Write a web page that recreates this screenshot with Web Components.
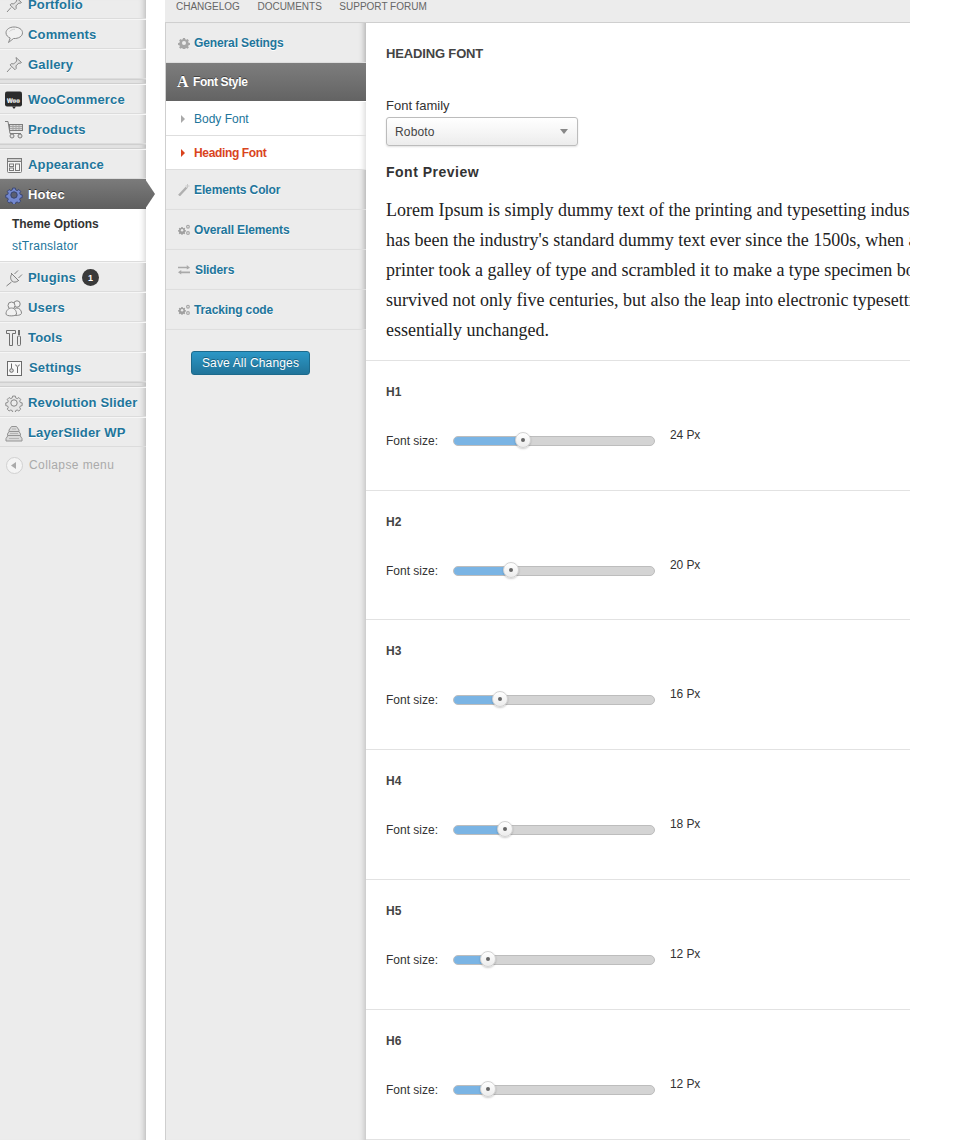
<!DOCTYPE html>
<html>
<head>
<meta charset="utf-8">
<title>Hotec Theme Options</title>
<style>
  html, body { margin: 0; height: 1140px; overflow: hidden; background: #fff; }
  body { display: flex; align-items: stretch; font-family: "Liberation Sans", Arial, sans-serif; }
</style>
</head>
<body>
<wp-sidebar>
  <wp-menu-item icon="pin" label="Portfolio"></wp-menu-item>
  <wp-menu-item icon="comment" label="Comments"></wp-menu-item>
  <wp-menu-item icon="pin" label="Gallery"></wp-menu-item>
  <wp-menu-sep></wp-menu-sep>
  <wp-menu-item icon="woo" label="WooCommerce"></wp-menu-item>
  <wp-menu-item icon="cart" label="Products"></wp-menu-item>
  <wp-menu-sep></wp-menu-sep>
  <wp-menu-item icon="appearance" label="Appearance"></wp-menu-item>
  <wp-menu-item icon="gear-blue" label="Hotec" current></wp-menu-item>
  <wp-submenu></wp-submenu>
  <wp-menu-item icon="plugin" label="Plugins" badge="1"></wp-menu-item>
  <wp-menu-item icon="users" label="Users"></wp-menu-item>
  <wp-menu-item icon="tools" label="Tools"></wp-menu-item>
  <wp-menu-item icon="settings" label="Settings"></wp-menu-item>
  <wp-menu-sep></wp-menu-sep>
  <wp-menu-item icon="gear" label="Revolution Slider"></wp-menu-item>
  <wp-menu-item icon="layers" label="LayerSlider WP"></wp-menu-item>
  <wp-menu-collapse></wp-menu-collapse>
</wp-sidebar>
<options-panel>
  <options-nav slot="nav"></options-nav>
  <font-preview></font-preview>
  <font-size-row name="H1" size="24" pos="70"></font-size-row>
  <font-size-row name="H2" size="20" pos="58" style="height:129px"></font-size-row>
  <font-size-row name="H3" size="16" pos="47"></font-size-row>
  <font-size-row name="H4" size="18" pos="52"></font-size-row>
  <font-size-row name="H5" size="12" pos="35"></font-size-row>
  <font-size-row name="H6" size="12" pos="35"></font-size-row>
</options-panel>

<script>
const COG = 'M7.5 1.5h3l.4 2 1.6.7 1.8-1.1 2 2-1.1 1.8.7 1.6 2 .4v3l-2 .4-.7 1.6 1.1 1.8-2 2-1.8-1.1-1.6.7-.4 2h-3l-.4-2-1.6-.7-1.8 1.1-2-2 1.1-1.8-.7-1.6-2-.4v-3l2-.4.7-1.6-1.1-1.8 2-2 1.800 1.100 1.600-.7z';

const ICONS = {
  pin: `<svg viewBox="0 0 18 18" width="18" height="18" fill="#e2e2e2" stroke="#8a8a8a"><path d="M11 1.500l5.500 5-1.500.8-1.200-.3-2.800 2.900.2 2.600-1.200 1.200-5-4.800 1.200-1.200 2.600.2 2.900-2.900-.2-1.300z"/><path d="M6 11.500L2 16" fill="none"/></svg>`,
  comment: `<svg viewBox="0 0 18 18" width="18" height="18" fill="#f1f1f1" stroke="#8a8a8a"><path d="M9 1C4.500 1 1 3.500 1 6.800c0 2.500 2 4.400 4.200 5.200L3.500 16.500l5-4c5 .3 9-2.200 9-5.700S13.500 1 9 1z"/><path d="M4.500 5.500C6 3.800 8 3.300 10 3.300" fill="none" stroke="#cfcfcf"/></svg>`,
  woo: `<svg viewBox="0 0 18 18" width="18" height="18"><rect x="0" y="0.500" width="17" height="15" rx="2" fill="#2c2c2c"/><path d="M7 15.500h4l-2 2.500z" fill="#2c2c2c"/><text x="8.500" y="10.500" font-size="6" font-weight="700" text-anchor="middle" fill="#ddd" font-family="Liberation Sans">Woo</text></svg>`,
  cart: `<svg viewBox="0 0 18 18" width="18" height="18" fill="none" stroke="#7d7d7d"><path d="M0 .5h3l2 12h11"/><rect x="4.500" y="3.500" width="13" height="6" fill="#d8d8d8"/><path d="M5 5.500h12M5 7.500h12M8 4v5M11 4v5M14 4v5" stroke="#a5a5a5"/><circle cx="7" cy="15" r="2" fill="#e2e2e2"/><circle cx="15" cy="15" r="2" fill="#e2e2e2"/></svg>`,
  appearance: `<svg viewBox="0 0 18 18" width="18" height="18" fill="none" stroke="#7a7a7a"><rect x="2.500" y="2.500" width="14" height="14" rx="1" fill="#f5f5f5"/><rect x="2.500" y="2.500" width="14" height="3" fill="#d0d0d0"/><rect x="4.500" y="8" width="4" height="2.500"/><rect x="4.500" y="12" width="4" height="2.500"/><rect x="10.500" y="8" width="4" height="6.500"/></svg>`,
  gear: `<svg viewBox="0 0 18 18" width="18" height="18" fill="#e6e6e6" stroke="#858585"><path d="${COG}" transform="translate(.7 .7) scale(.92)"/><circle cx="9" cy="9" r="3.200" fill="#ececec"/></svg>`,
  'gear-blue': `<svg viewBox="0 0 18 18" width="18" height="18" fill="#7388cf" stroke="#36436f"><path d="${COG}" transform="translate(.7 .7) scale(.92)"/><circle cx="9" cy="9" r="3.200" fill="#5b5f6f"/></svg>`,
  plugin: `<svg viewBox="0 0 18 18" width="18" height="18" fill="#e6e6e6" stroke="#808080"><path d="M7 5l6.500 6.500c-2.200 2-4.800 2.200-6.500.5S5 7.200 7 5z"/><path d="M9.500 5L13 1.500M13.500 9L17 5.500M6.500 13L1.500 17" fill="none"/><path d="M6 4l8 8" fill="none"/></svg>`,
  users: `<svg viewBox="0 0 18 18" width="18" height="18" fill="#f1f1f1" stroke="#858585"><circle cx="12" cy="5" r="3.200"/><path d="M8 15c0-4 2-6 4-6s4.500 2 4.500 5-8.500 3-8.500 1z"/><circle cx="6.500" cy="6.500" r="3.500"/><path d="M1 15c0-4 3-6 5.500-6s5 2 5 6c0 2.500-10.500 2.500-10.500 0z"/></svg>`,
  tools: `<svg viewBox="0 0 18 18" width="18" height="18" fill="#ececec" stroke="#6f6f6f"><path d="M1.500 1.500h9v3h-3v12h-3v-12h-3z"/><path d="M14 1v5" fill="none" stroke-width="2"/><rect x="12.500" y="7" width="3" height="9.500" rx="1"/></svg>`,
  settings: `<svg viewBox="0 0 18 18" width="18" height="18" fill="none" stroke="#6a6a6a"><rect x="2.500" y="2.500" width="14" height="14" fill="#f8f8f8"/><path d="M6.500 4.500v5M12.500 8v6"/><circle cx="6.500" cy="11.500" r="1.800" fill="#ddd"/><path d="M10.700 5.500a1.800 1.800 0 0 0 3.600 0" /></svg>`,
  layers: `<svg viewBox="0 0 18 18" width="18" height="18" fill="#d9d9d9" stroke="#949494"><path d="M1 14.500l2-3h12l2 3V17H1z"/><path d="M2.500 10L4 7.500h10l1.500 2.500v1.500h-13z"/><path d="M4 6L6.500 2.500h5L14 6v1.500H4z"/><path d="M4 14.500h10M5 9.500h8M7 5h4" stroke="#b5b5b5"/></svg>`
};
const NAV_ICONS = {
  gear: `<svg viewBox="0 0 18 18" width="12" height="12" fill="#a6a6a6"><path d="${COG}"/><circle cx="9" cy="9" r="3" fill="#ececec"/></svg>`,
  wand: `<svg viewBox="0 0 12 12" width="12" height="12" fill="none"><path d="M1 11.500L8.500 3.500" stroke="#b0b0b0" stroke-width="2.500"/><path d="M9.500 0v4M11.500 2h-4" stroke="#c8c8c8"/></svg>`,
  gears: `<svg viewBox="0 0 13 12" width="13" height="12"><g fill="#a0a0a0"><path d="${COG}" transform="translate(0 2) scale(.48)"/></g><circle cx="4.400" cy="6.300" r="1.300" fill="#ececec"/><circle cx="10.800" cy="2.500" r="1.500" fill="none" stroke="#a6a6a6" stroke-width="1.200"/><circle cx="10.800" cy="9.300" r="1.500" fill="none" stroke="#a6a6a6" stroke-width="1.200"/></svg>`,
  swap: `<svg viewBox="0 0 13 12" width="13" height="12" fill="#a9a9a9"><path d="M0 2.500h9.500V0.500L13 3.500 9.500 5.500V4H0zM13 7.500H3.500V6L0 8.500l3.500 2.500V9.500H13z"/></svg>`
};

class WpSidebar extends HTMLElement {
  constructor() {
    super();
    this.attachShadow({ mode: 'open' });
    this.shadowRoot.innerHTML = `
      <style>
        :host {
          display: block;
          flex: 0 0 146px;
          width: 146px;
          height: 1140px;
          background: #ececec;
          box-shadow: inset -7px 0 6px -6px rgba(0, 0, 0, 0.25);
        }
        .menu { display: flex; flex-direction: column; margin-top: -11px; }
      </style>
      <div class="menu"><slot></slot></div>
    `;
  }
}

class WpMenuItem extends HTMLElement {
  constructor() {
    super();
    this.attachShadow({ mode: 'open' });
  }
  connectedCallback() {
    const badge = this.getAttribute('badge');
    const isSettings = this.getAttribute('icon') === 'settings';
    this.shadowRoot.innerHTML = `
      <style>
        :host {
          display: flex;
          align-items: center;
          box-sizing: border-box;
          position: relative;
          height: 30px;
          padding: 1px 0 0 5px;
          gap: 5px;
          font: bold 13px/16px "Liberation Sans", Arial, sans-serif;
          color: #21759b;
          text-shadow: 0 1px 0 #fff;
          border-top: 1px solid #f6f6f6;
          border-bottom: 1px solid #dcdcdc;
        }
        :host([current]) {
          color: #fff;
          border: 0;
          padding-top: 1px;
          text-shadow: 0 -1px 0 #333;
          background: linear-gradient(#7b7b7b, #5f5f5f);
        }
        :host([current])::after {
          content: "";
          position: absolute;
          left: 145px;
          top: 0;
          width: 10px;
          height: 30px;
          background: linear-gradient(#7b7b7b, #5f5f5f);
          clip-path: polygon(0 0, 100% 50%, 0 100%);
        }
        .icon { display: flex; width: 18px; height: 18px; flex: none; }
        .label { white-space: nowrap; letter-spacing: 0.15px; ${isSettings ? 'margin-left: 1px;' : ''} }
        .badge {
          display: flex;
          align-items: center;
          justify-content: center;
          width: 17px;
          height: 17px;
          margin-left: 1px;
          border-radius: 50%;
          background: #3a3a3a;
          color: #fff;
          font-size: 9px;
          text-shadow: none;
        }
      </style>
      <span class="icon">${ICONS[this.getAttribute('icon')] || ''}</span>
      <span class="label">${this.getAttribute('label')}</span>
      ${badge ? `<span class="badge">${badge}</span>` : ''}
    `;
  }
}

class WpMenuSep extends HTMLElement {
  constructor() {
    super();
    this.attachShadow({ mode: 'open' });
    this.shadowRoot.innerHTML = `
      <style>
        :host {
          display: block;
          box-sizing: border-box;
          height: 5px;
          background: #e2e2e2;
          border-top: 1px solid #cfcfcf;
          border-bottom: 1px solid #cfcfcf;
          box-shadow: inset -7px 0 6px -6px rgba(0, 0, 0, 0.25);
        }
      </style>
    `;
  }
}

class WpSubmenu extends HTMLElement {
  constructor() {
    super();
    this.attachShadow({ mode: 'open' });
    this.shadowRoot.innerHTML = `
      <style>
        :host {
          display: flex;
          flex-direction: column;
          box-sizing: border-box;
          height: 53px;
          padding: 4px 0 0 12px;
          background: #fff;
          border-bottom: 1px solid #dcdcdc;
          font: 12px/22px "Liberation Sans", Arial, sans-serif;
          box-shadow: inset -7px 0 6px -6px rgba(0, 0, 0, 0.2);
        }
        b { color: #333; letter-spacing: -0.05px; }
        span { color: #21759b; letter-spacing: 0.25px; }
      </style>
      <b>Theme Options</b>
      <span>stTranslator</span>
    `;
  }
}

class WpMenuCollapse extends HTMLElement {
  constructor() {
    super();
    this.attachShadow({ mode: 'open' });
    this.shadowRoot.innerHTML = `
      <style>
        :host {
          display: flex;
          align-items: center;
          gap: 6px;
          height: 36px;
          padding-left: 6px;
          font: 12px/16px "Liberation Sans", Arial, sans-serif;
          letter-spacing: 0.4px;
          color: #aaa;
        }
        svg { flex: none; }
      </style>
      <svg viewBox="0 0 17 17" width="17" height="17">
        <circle cx="8.500" cy="8.500" r="8" fill="#f4f4f4" stroke="#d0d0d0"/>
        <path d="M5 8.500l5-3.500v7z" fill="#aaa"/>
      </svg>
      <span>Collapse menu</span>
    `;
  }
}

class OptionsPanel extends HTMLElement {
  constructor() {
    super();
    this.attachShadow({ mode: 'open' });
    this.shadowRoot.innerHTML = `
      <style>
        :host {
          display: flex;
          flex-direction: column;
          flex: 0 0 745px;
          width: 745px;
          height: 1140px;
          margin-left: 19px;
          overflow: hidden;
        }
        .top {
          display: flex;
          gap: 17.5px;
          box-sizing: border-box;
          height: 23px;
          padding: 0 0 8px 11px;
          align-items: center;
          background: #ececec;
          border-bottom: 1px solid #cfcfcf;
          font: 10px/12px "Liberation Sans", Arial, sans-serif;
          color: #666;
        }
        .body { display: flex; flex: 1; min-height: 0; }
        .main { flex: 1; min-width: 0; overflow: hidden; }
      </style>
      <div class="top"><span>CHANGELOG</span><span>DOCUMENTS</span><span>SUPPORT FORUM</span></div>
      <div class="body">
        <slot name="nav"></slot>
        <div class="main"><slot></slot></div>
      </div>
    `;
  }
}

class OptionsNav extends HTMLElement {
  constructor() {
    super();
    this.attachShadow({ mode: 'open' });
    this.shadowRoot.innerHTML = `
      <style>
        :host {
          display: block;
          box-sizing: border-box;
          flex: 0 0 201px;
          width: 201px;
          background: #ececec;
          border-left: 1px solid #cfcfcf;
          box-shadow: inset -7px 0 6px -6px rgba(0, 0, 0, 0.22);
          font: bold 12px/16px "Liberation Sans", Arial, sans-serif;
          letter-spacing: -0.12px;
          color: #21759b;
        }
        .item {
          display: flex;
          align-items: center;
          box-sizing: border-box;
          height: 40px;
          padding-left: 12px;
          gap: 4px;
          text-shadow: 0 1px 0 #fff;
          border-bottom: 1px solid #dedede;
          box-shadow: inset -7px -1px 6px -6px rgba(0, 0, 0, 0.1);
        }
        .item svg, .item .ic { width: 12px; flex: none; }
        .active {
          height: 39px;
          padding-left: 11px;
          gap: 4px;
          color: #fff;
          letter-spacing: -0.35px;
          text-shadow: 0 -1px 0 #444;
          background: linear-gradient(#7d7d7d, #636363);
          border-bottom: 1px solid #fff;
          box-shadow: none;
        }
        .active .ic {
          font: bold 16px/16px "Liberation Serif", serif;
          color: #fff;
        }
        .sub {
          display: flex;
          align-items: center;
          box-sizing: border-box;
          height: 34px;
          padding-left: 15px;
          gap: 9px;
          background: #fff;
          font-weight: normal;
          letter-spacing: 0;
          border-bottom: 1px solid #dedede;
          box-shadow: inset -7px 0 6px -6px rgba(0, 0, 0, 0.18);
        }
        .sub i {
          width: 0;
          height: 0;
          border-left: 4px solid #a9a9a9;
          border-top: 4px solid transparent;
          border-bottom: 4px solid transparent;
        }
        .sub.on { color: #d9441e; font-weight: bold; letter-spacing: -0.35px; }
        .sub.on i { border-left-color: #d9441e; }
        .swap { gap: 5px; }
        .save {
          margin: 21px 0 0 25px;
          width: 119px;
          height: 24px;
          box-sizing: border-box;
          display: flex;
          align-items: center;
          justify-content: center;
          border: 1px solid #1d6a8c;
          border-radius: 3px;
          background: linear-gradient(#2c97c6, #21749a);
          color: #fff;
          font-weight: normal;
          letter-spacing: 0.15px;
          text-shadow: 0 -1px 0 #1a5f7e;
        }
      </style>
      <div class="item">${NAV_ICONS.gear}<span>General Setings</span></div>
      <div class="item active"><span class="ic">A</span><span>Font Style</span></div>
      <div class="sub"><i></i><span>Body Font</span></div>
      <div class="sub on"><i></i><span>Heading Font</span></div>
      <div class="item">${NAV_ICONS.wand}<span>Elements Color</span></div>
      <div class="item">${NAV_ICONS.gears}<span>Overall Elements</span></div>
      <div class="item swap">${NAV_ICONS.swap}<span>Sliders</span></div>
      <div class="item">${NAV_ICONS.gears}<span>Tracking code</span></div>
      <div class="save">Save All Changes</div>
    `;
  }
}

class FontPreview extends HTMLElement {
  constructor() {
    super();
    this.attachShadow({ mode: 'open' });
    this.shadowRoot.innerHTML = `
      <style>
        :host {
          display: block;
          box-sizing: border-box;
          height: 338px;
          padding: 23px 0 0 20px;
          border-bottom: 1px solid #e2e2e2;
          font: 13px/16px "Liberation Sans", Arial, sans-serif;
          color: #333;
          white-space: nowrap;
        }
        .title { font-weight: bold; color: #444; letter-spacing: -0.15px; }
        .field { margin-top: 36px; }
        .select {
          display: flex;
          align-items: center;
          justify-content: space-between;
          box-sizing: border-box;
          width: 192px;
          height: 29px;
          margin-top: 3px;
          padding: 0 9px 0 8px;
          border: 1px solid #bcbcbc;
          border-radius: 3px;
          background: linear-gradient(#fff, #f6f6f6 50%, #ececec);
          box-shadow: 0 1px 2px rgba(0, 0, 0, 0.12);
          font-size: 12px;
          letter-spacing: 0.15px;
          color: #444;
        }
        .select i {
          width: 0;
          height: 0;
          border-top: 5px solid #888;
          border-left: 4px solid transparent;
          border-right: 4px solid transparent;
        }
        h4 { margin: 18px 0 0; font: bold 14px/16px "Liberation Sans", Arial, sans-serif; letter-spacing: 0.5px; color: #333; }
        p { margin: 15px 0 0; font: 18px/30px "Liberation Serif", "Times New Roman", serif; color: #222; }
      </style>
      <div class="title">HEADING FONT</div>
      <div class="field">Font family</div>
      <div class="select"><span>Roboto</span><i></i></div>
      <h4>Font Preview</h4>
      <p>Lorem Ipsum is simply dummy text of the printing and typesetting industry. Lorem Ipsum<br>
      has been the industry's standard dummy text ever since the 1500s, when an unknown<br>
      printer took a galley of type and scrambled it to make a type specimen book. It has<br>
      survived not only five centuries, but also the leap into electronic typesetting, remaining<br>
      essentially unchanged.</p>
    `;
  }
}

class FontSizeRow extends HTMLElement {
  constructor() {
    super();
    this.attachShadow({ mode: 'open' });
  }
  connectedCallback() {
    const pos = this.getAttribute('pos');
    this.shadowRoot.innerHTML = `
      <style>
        :host {
          display: block;
          box-sizing: border-box;
          height: 130px;
          padding: 23px 0 0 20px;
          border-bottom: 1px solid #e2e2e2;
          font: 12px/16px "Liberation Sans", Arial, sans-serif;
          color: #333;
        }
        .name { font-weight: bold; color: #444; }
        .row { display: flex; align-items: center; height: 22px; margin-top: 30px; }
        .lbl { width: 67px; flex: none; }
        .track {
          position: relative;
          box-sizing: border-box;
          width: 202px;
          height: 10px;
          flex: none;
          border: 1px solid #bdbdbd;
          border-radius: 5px;
          background: #d4d4d4;
        }
        .fill {
          width: ${pos - 1}px;
          height: 100%;
          border-radius: 4px 0 0 4px;
          background: #7ab4e4;
        }
        .handle {
          position: absolute;
          left: ${pos - 9}px;
          top: -5px;
          box-sizing: border-box;
          width: 16px;
          height: 16px;
          display: flex;
          align-items: center;
          justify-content: center;
          border-radius: 50%;
          border: 1px solid #d2d2d2;
          background: linear-gradient(#fff, #ececec);
          box-shadow: 0 1px 2px rgba(0, 0, 0, 0.2);
        }
        .handle::after { content: ""; width: 4px; height: 4px; border-radius: 50%; background: #666; }
        .val { margin: 0 0 12px 15px; font-size: 12px; line-height: 14px; letter-spacing: -0.1px; color: #333; }
      </style>
      <div class="name">${this.getAttribute('name')}</div>
      <div class="row">
        <span class="lbl">Font size:</span>
        <div class="track"><div class="fill"></div><div class="handle"></div></div>
        <span class="val">${this.getAttribute('size')} Px</span>
      </div>
    `;
  }
}

customElements.define('wp-sidebar', WpSidebar);
customElements.define('wp-menu-item', WpMenuItem);
customElements.define('wp-menu-sep', WpMenuSep);
customElements.define('wp-submenu', WpSubmenu);
customElements.define('wp-menu-collapse', WpMenuCollapse);
customElements.define('options-panel', OptionsPanel);
customElements.define('options-nav', OptionsNav);
customElements.define('font-preview', FontPreview);
customElements.define('font-size-row', FontSizeRow);
</script>
</body>
</html>
